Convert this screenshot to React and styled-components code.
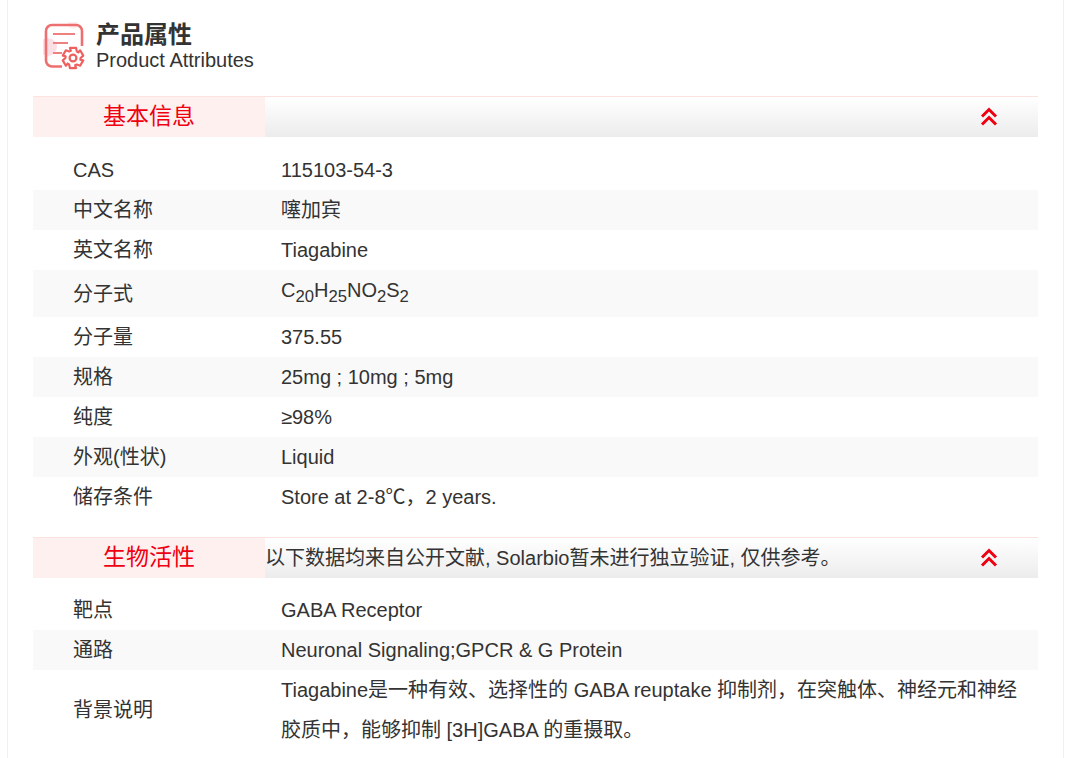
import React from 'react';
import styled, { createGlobalStyle } from 'styled-components';

const Global = createGlobalStyle`
  html, body { margin: 0; padding: 0; background: #fff; overflow: hidden; }
  body { font-family: "Liberation Sans", "Noto Sans CJK SC", sans-serif; color: #333; }
`;
const Frame = styled.div`
  width: 1057px; height: 758px; margin-left: 7px; box-sizing: border-box;
  border-left: 1px solid #f0f0f0; border-right: 1px solid #f0f0f0;
  padding: 0 25px; overflow: hidden;
`;
const Header = styled.header`
  display: flex; align-items: flex-start; height: 96px; padding: 21px 0 0 10px; box-sizing: border-box; gap: 9px;
`;
const HeadText = styled.div`display: flex; flex-direction: column;`;
const Title = styled.div`font-size: 24px; font-weight: 700; line-height: 28px; color: #333;`;
const Sub = styled.div`font-size: 20px; line-height: 24px; margin-top: -1px; color: #333;`;
const Bar = styled.div`
  display: flex; align-items: center; height: 41px; width: 1005px; box-sizing: border-box;
  border-top: 1px solid #fde3e0;
  background: linear-gradient(#fff, #ececec);
`;
const Tab = styled.div`
  width: 232px; height: 40px; flex: none; background: #fff0f0; color: #ee0011;
  font-size: 23px; line-height: 39px; text-align: center;
`;
const Note = styled.div`flex: 1; font-size: 20px; line-height: 40px; color: #333; white-space: nowrap;`;
const Toggle = styled.svg`flex: none; margin-left: auto; margin-right: 40px; display: block;`;
const Rows = styled.div`padding: ${p => p.$top}px 0 20px;`;
const Row = styled.div`
  display: flex; align-items: center;
  background: ${p => (p.$alt ? '#f9f9f9' : '#fff')}; font-size: 20px; line-height: 40px; color: #333;
`;
const Label = styled.div`width: 248px; padding-left: 40px; box-sizing: border-box; flex: none;`;
const Value = styled.div`flex: 1; padding-right: 15px;`;
const Wrap = styled.div`width: 1005px;`;
const Doc = styled.svg`flex: none; margin-top: 1px;`;

const Chevrons = () => (
  <Toggle width="18" height="20" viewBox="0 0 18 20" fill="none" stroke="#ee0011" strokeWidth="3">
    <path d="M2 9.500 9 2.500l7 7M2 17.500l7-7 7 7" />
  </Toggle>
);

const gearPath = (cx, cy, ro, ri) => {
  const pts = [];
  for (let i = 0; i < 6; i++) {
    const a = (Math.PI / 3) * i - Math.PI / 2;
    [[-0.3, ro], [0.3, ro], [0.52, ri]].forEach(([d, r]) => {
      pts.push(`${(cx + r * Math.cos(a + d)).toFixed(2)} ${(cy + r * Math.sin(a + d)).toFixed(2)}`);
    });
    pts.push(`${(cx + ri * Math.cos(a + 0.76)).toFixed(2)} ${(cy + ri * Math.sin(a + 0.76)).toFixed(2)}`);
  }
  return `M${pts.join('L')}Z`;
};

const Icon = () => (
  <Doc width="44" height="50" viewBox="0 0 44 50" fill="none">
    <circle cx="30" cy="2" r="5" fill="#fdeef1" />
    <circle cx="5" cy="25" r="9" fill="#fcdfe5" />
    <path d="M19 44.500H9a6 6 0 0 1-6-6V9a6 6 0 0 1 6-6h24a6 6 0 0 1 6 6v15" stroke="#ee6f6f" strokeWidth="2.600" />
    <path d="M10 12h22M10 21h15M10 31h9" stroke="#ee8080" strokeWidth="2.200" />
    <path d={gearPath(30, 36, 10.5, 7.6)} fill="#fff" stroke="#ee6060" strokeWidth="2.200" strokeLinejoin="round" />
    <circle cx="30" cy="36" r="3.400" stroke="#ee6060" strokeWidth="2.200" />
  </Doc>
);

const basic = [
  ['CAS', '115103-54-3'],
  ['中文名称', '噻加宾'],
  ['英文名称', 'Tiagabine'],
  ['分子式', <>C<sub>20</sub>H<sub>25</sub>NO<sub>2</sub>S<sub>2</sub></>],
  ['分子量', '375.55'],
  ['规格', '25mg ; 10mg ; 5mg'],
  ['纯度', '≥98%'],
  ['外观(性状)', 'Liquid'],
  ['储存条件', 'Store at 2-8℃，2 years.'],
];

export default function App() {
  return (
    <Frame>
      <Global />
      <Header>
        <Icon />
        <HeadText>
          <Title>产品属性</Title>
          <Sub>Product Attributes</Sub>
        </HeadText>
      </Header>
      <Wrap>
        <Bar>
          <Tab>基本信息</Tab>
          <Chevrons />
        </Bar>
        <Rows $top={13}>
          {basic.map(([k, v], i) => (
            <Row key={k} $alt={i % 2 === 1}>
              <Label>{k}</Label>
              <Value>{v}</Value>
            </Row>
          ))}
        </Rows>
        <Bar>
          <Tab>生物活性</Tab>
          <Note>以下数据均来自公开文献, Solarbio暂未进行独立验证, 仅供参考。</Note>
          <Chevrons />
        </Bar>
        <Rows $top={12}>
          <Row><Label>靶点</Label><Value>GABA Receptor</Value></Row>
          <Row $alt><Label>通路</Label><Value>Neuronal Signaling;GPCR &amp; G Protein</Value></Row>
          <Row>
            <Label>背景说明</Label>
            <Value>Tiagabine是一种有效、选择性的 GABA reuptake 抑制剂，在突触体、神经元和神经胶质中，能够抑制 [3H]GABA 的重摄取。</Value>
          </Row>
        </Rows>
      </Wrap>
    </Frame>
  );
}
